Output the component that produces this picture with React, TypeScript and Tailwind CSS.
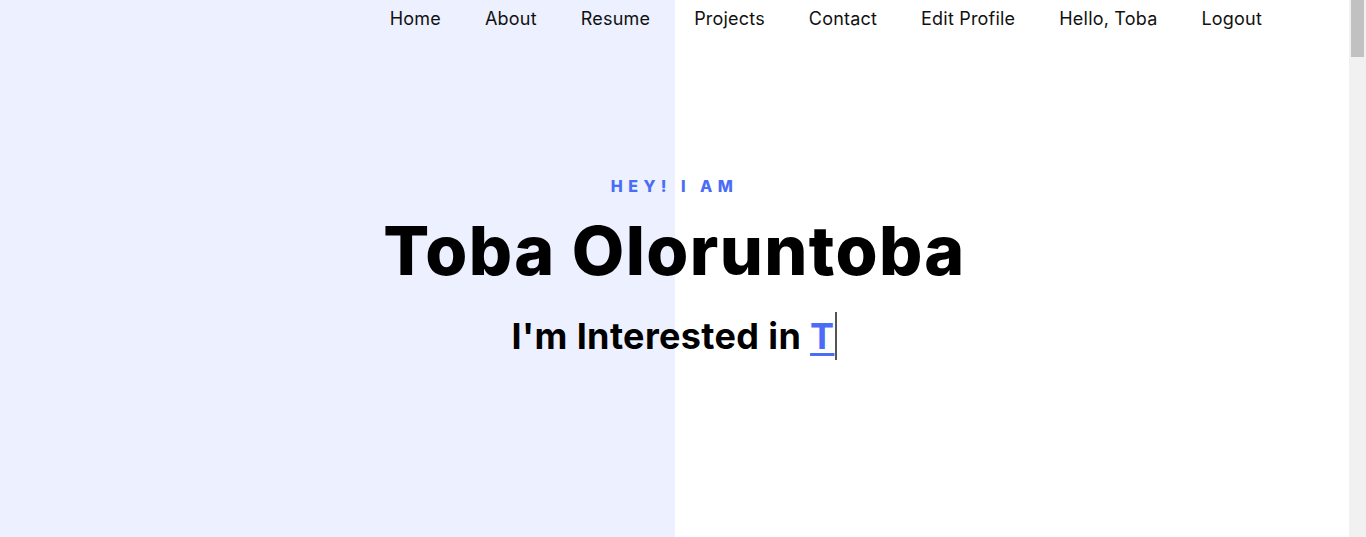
export default function App() {
    const links = ["Home", "About", "Resume", "Projects", "Contact", "Edit Profile", "Hello, Toba", "Logout"]

    return (
        <div className="flex h-[537px] overflow-hidden bg-white font-['Inter',sans-serif] text-black">
            <main className="relative flex-1">
                {/* Navbar */}
                <nav className="absolute left-0 right-0 top-0 z-10">
                    <ul className="flex justify-end pr-[65px] pt-[7px]">
                        {links.map((l) => (
                            <li key={l} className="px-[22px] text-[18px] leading-6 font-normal tracking-[0.2px] text-[#111]">
                                {l}
                            </li>
                        ))}
                    </ul>
                </nav>

                {/* Hero */}
                <section className="grid h-full grid-cols-2">
                    <div className="bg-[#ecf0ff]"></div>
                    <div className="bg-white"></div>
                </section>
                <div className="absolute inset-0 flex flex-col items-center justify-center pb-[4px]">
                    <p className="text-[16px] font-extrabold uppercase leading-6 tracking-[0.34em] text-[#4a6cf7]">Hey! I am</p>
                    <h1 className="mt-[12px] text-[68px] font-extrabold leading-[80px] tracking-[0.02em]">Toba Oloruntoba</h1>
                    <h2 className="mt-[22px] flex items-center text-[36px] font-bold leading-[48px] tracking-[0.01em]">
                        I'm Interested in&nbsp;
                        <a href="#" className="text-[#4a6cf7] underline underline-offset-4">T</a>
                        <span className="ml-[1px] inline-block h-[48px] w-[2px] bg-[#555]"></span>
                    </h2>
                </div>
            </main>

            {/* Scrollbar */}
            <div className="w-[17px] shrink-0 bg-[#f1f1f1] px-[2px]">
                <div className="h-[57px] bg-[#c1c1c1]"></div>
            </div>
        </div>
    )
}
